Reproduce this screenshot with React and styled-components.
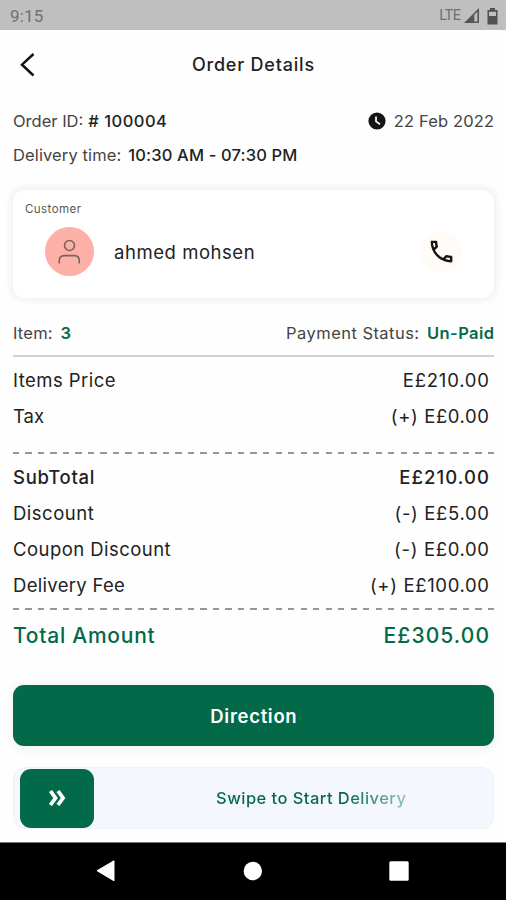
import React from "react";
import styled, { createGlobalStyle } from "styled-components";

const GREEN = "#026a49";

const GlobalStyle = createGlobalStyle`
  * {
    box-sizing: border-box;
  }
  body {
    margin: 0;
    background: #fefefe;
    font-family: Inter, Roboto, sans-serif;
  }
  button {
    font-family: inherit;
  }
`;

const Screen = styled.div`
  display: flex;
  flex-direction: column;
  height: 900px;
  overflow: hidden;
  color: #222;
`;

const StatusBar = styled.div`
  display: flex;
  align-items: center;
  flex: none;
  height: 30px;
  padding: 2px 8px 0 10px;
  background: #bfbfbf;
  font-family: Roboto, sans-serif;
`;

const StatusIcons = styled.div`
  display: flex;
  align-items: center;
  gap: 7px;
  margin-left: auto;
`;

const Header = styled.header`
  display: grid;
  grid-template-columns: 40px 1fr 40px;
  align-items: center;
  flex: none;
  height: 70px;
  padding: 0 13px;
  text-align: center;
`;

const BackButton = styled.button`
  display: flex;
  padding: 0 0 0 6px;
  border: none;
  background: none;
`;

const Content = styled.main`
  display: flex;
  flex-direction: column;
  flex: none;
  height: 742px;
  padding: 4px 12px 0 13px;
`;

const Text = styled.span`
  font-size: ${(props) => props.$size || 16.5}px;
  font-weight: ${(props) => props.$weight || 400};
  letter-spacing: ${(props) => props.$spacing || 0}px;
  margin-right: ${(props) => -(props.$spacing || 0)}px;
  color: ${(props) => props.$color || "#222"};
  line-height: 24px;
  white-space: pre;
`;

const Row = styled.div`
  display: flex;
  align-items: center;
  justify-content: space-between;
  flex: none;
  height: ${(props) => props.$height || 36}px;
  padding-right: ${(props) => props.$inset || 0}px;
`;

const Pair = styled.div`
  display: flex;
  align-items: center;
  gap: ${(props) => props.$gap || 7}px;
`;

const CustomerCard = styled.section`
  flex: none;
  height: 108px;
  margin: 19px 0 17px;
  padding: 7px 32px 0 12px;
  border-radius: 12px;
  background: #fff;
  box-shadow: 0 0 6px 3px #f1f1f1;
`;

const CardLabel = styled.div`
  display: flex;
  height: 25px;
`;

const CustomerRow = styled.div`
  display: flex;
  align-items: center;
  height: 59px;
  padding-left: 20px;
`;

const Avatar = styled.div`
  display: flex;
  align-items: center;
  justify-content: center;
  width: 49px;
  height: 49px;
  margin-right: 20px;
  border-radius: 50%;
  background: #fdb0a8;
`;

const CallButton = styled.button`
  display: flex;
  align-items: center;
  justify-content: center;
  width: 42px;
  height: 42px;
  margin-left: auto;
  padding: 0;
  border: none;
  border-radius: 50%;
  background: #fffcf8;
`;

const Divider = styled.div`
  flex: none;
  height: 2px;
  margin: 4px 0 5px;
  background: #d2d2d2;
`;

const DashedDivider = styled.div`
  flex: none;
  height: 2px;
  margin: ${(props) => props.$margin};
  background: repeating-linear-gradient(
    to right,
    #979797 0 6.3px,
    transparent 6.3px 12.5px
  );
`;

const DirectionButton = styled.button`
  flex: none;
  height: 61px;
  margin-top: 31px;
  padding: 0;
  border: none;
  border-radius: 11px;
  background: ${GREEN};
  box-shadow: 0 2px 9px 3px #f5f5f5;
`;

const SwipeTrack = styled.div`
  display: flex;
  align-items: center;
  flex: none;
  height: 62px;
  margin-top: 21px;
  padding: 0 6px;
  border: 1px solid #eff2f6;
  border-radius: 12px;
  background: #f4f7fe;
`;

const SwipeThumb = styled.div`
  display: flex;
  align-items: center;
  justify-content: center;
  width: 74px;
  height: 59px;
  border-radius: 11px;
  background: ${GREEN};
`;

const SwipeLabel = styled.div`
  flex: 1;
  padding-left: 41px;
  text-align: center;
`;

const ShimmerText = styled(Text)`
  color: transparent;
  background: linear-gradient(to right, ${GREEN} 68%, #8fc4b0 100%);
  background-clip: text;
`;

const NavBar = styled.nav`
  display: flex;
  align-items: center;
  justify-content: space-between;
  flex: 1;
  padding: 0 97px 2px 96px;
  border-top: 1px solid #777;
  background: #000;
`;

const BackIcon = () => (
  <svg width="16" height="26" viewBox="0 0 16 26" fill="none">
    <path d="M14.5 2L3 12.7L14.5 23.5" stroke="#111" strokeWidth="2.5" />
  </svg>
);

const SignalIcon = () => (
  <svg width="16" height="16" viewBox="0 0 16 16">
    <path d="M0 15L15 0V15Z" fill="#555" />
    <path d="M10.3 6.8L13.4 3.7V13.5H10.3Z" fill="#bfbfbf" />
  </svg>
);

const BatteryIcon = () => (
  <svg width="11" height="17" viewBox="0 0 11 17">
    <path d="M3 0H8V2H10.5V16.5H0.5V2H3Z" fill="#505050" />
    <path d="M2 3.8H9V8H2Z" fill="#bfbfbf" />
  </svg>
);

const ClockIcon = () => (
  <svg width="18" height="18" viewBox="0 0 18 18">
    <circle cx="9" cy="9" r="8.6" fill="#151515" />
    <path d="M8 4.5V9.4L12 12.3" fill="none" stroke="#fff" strokeWidth="1.7" />
  </svg>
);

const PersonIcon = () => (
  <svg width="24" height="26" viewBox="0 0 24 26" fill="none">
    <g stroke="#79635d" strokeWidth="1.6">
      <circle cx="11.5" cy="6.5" r="5" />
      <path d="M1.3 24.5V21.8C1.3 18.8 3.2 16.6 6.3 16.6H16.3C19.4 16.6 21.3 18.8 21.3 21.8V24.5" />
    </g>
  </svg>
);

const PhoneIcon = () => (
  <svg width="29" height="29" viewBox="0 0 24 24">
    <path
      fill="#151515"
      d="M6.54 5c.06.89.21 1.76.45 2.59l-1.2 1.2c-.41-1.2-.67-2.47-.76-3.79h1.51m9.86 12.02c.85.24 1.72.39 2.6.45v1.49c-1.32-.09-2.59-.35-3.8-.75l1.2-1.19M7.5 3H4c-.55 0-1 .45-1 1 0 9.39 7.61 17 17 17 .55 0 1-.45 1-1v-3.49c0-.55-.45-1-1-1-1.24 0-2.45-.2-3.57-.57-.1-.04-.21-.05-.31-.05-.26 0-.51.1-.71.29l-2.2 2.2c-2.83-1.45-5.15-3.76-6.59-6.59l2.2-2.2c.28-.28.36-.67.25-1.02C8.7 6.45 8.5 5.25 8.5 4c0-.55-.45-1-1-1z"
    />
  </svg>
);

const ChevronsIcon = () => (
  <svg width="18" height="18" viewBox="0 0 18 18" fill="none">
    <path
      d="M2.5 2L7.5 9L2.5 16M10 2L15 9L10 16"
      stroke="#fff"
      strokeWidth="3.8"
    />
  </svg>
);

const NavIcons = () => (
  <>
    <svg width="19" height="22" viewBox="0 0 19 22">
      <path d="M1 10.7L18 0.8V20.8Z" fill="#fff" stroke="#fff" />
    </svg>
    <svg width="20" height="20" viewBox="0 0 20 20">
      <circle cx="10.8" cy="10" r="9.2" fill="#fff" />
    </svg>
    <svg width="20" height="20" viewBox="0 0 20 20">
      <rect x="0.3" y="0.3" width="19.4" height="19.4" rx="1.5" fill="#fff" />
    </svg>
  </>
);

const PriceRow = ({ label, value, labelSpacing, valueSpacing, weight, size, color }) => (
  <Row $inset={5}>
    <Text $size={size || 18.5} $weight={weight} $color={color} $spacing={labelSpacing}>
      {label}
    </Text>
    <Text $size={size || 18.5} $weight={weight} $color={color} $spacing={valueSpacing}>
      {value}
    </Text>
  </Row>
);

const App = () => {
  return (
    <Screen>
      <GlobalStyle />
      <StatusBar>
        <Text $size={17} $color="#707070" $spacing={0.2}>
          9:15
        </Text>
        <StatusIcons>
          <Pair $gap={3}>
            <Text $size={14.5} $color="#707070" $spacing={-0.5}>
              LTE
            </Text>
            <SignalIcon />
          </Pair>
          <BatteryIcon />
        </StatusIcons>
      </StatusBar>
      <Header>
        <BackButton>
          <BackIcon />
        </BackButton>
        <Text $size={18} $weight={500} $spacing={0.8}>
          Order Details
        </Text>
      </Header>
      <Content>
        <Row $height={34}>
          <Pair $gap={5}>
            <Text $color="#444">Order ID:</Text>
            <Text $weight={500} $spacing={0.5}>
              # 100004
            </Text>
          </Pair>
          <Pair $gap={8}>
            <ClockIcon />
            <Text $color="#444" $spacing={0.15}>
              22 Feb 2022
            </Text>
          </Pair>
        </Row>
        <Row $height={33}>
          <Pair $gap={7}>
            <Text $color="#444" $spacing={0.12}>
              Delivery time:
            </Text>
            <Text $weight={500} $spacing={0.15}>
              10:30 AM - 07:30 PM
            </Text>
          </Pair>
        </Row>
        <CustomerCard>
          <CardLabel>
            <Text $size={11.5} $spacing={0.45} $color="#555">
              Customer
            </Text>
          </CardLabel>
          <CustomerRow>
            <Avatar>
              <PersonIcon />
            </Avatar>
            <Text $size={18.5} $spacing={0.55}>
              ahmed mohsen
            </Text>
            <CallButton>
              <PhoneIcon />
            </CallButton>
          </CustomerRow>
        </CustomerCard>
        <Row $height={36}>
          <Pair $gap={8}>
            <Text $color="#444" $spacing={0.2}>
              Item:
            </Text>
            <Text $weight={600} $color={GREEN}>
              3
            </Text>
          </Pair>
          <Pair $gap={8}>
            <Text $color="#444" $spacing={0.45}>
              Payment Status:
            </Text>
            <Text $weight={600} $color={GREEN} $spacing={0.4}>
              Un-Paid
            </Text>
          </Pair>
        </Row>
        <Divider />
        <PriceRow label="Items Price" value="E£210.00" labelSpacing={0.45} valueSpacing={0.8} />
        <PriceRow label="Tax" value="(+) E£0.00" valueSpacing={0.6} />
        <DashedDivider $margin="18px 0 5px" />
        <PriceRow
          label="SubTotal"
          value="E£210.00"
          weight={500}
          labelSpacing={0.7}
          valueSpacing={1.1}
        />
        <PriceRow label="Discount" value="(-) E£5.00" labelSpacing={0.5} valueSpacing={0.65} />
        <PriceRow label="Coupon Discount" value="(-) E£0.00" labelSpacing={0.45} valueSpacing={0.65} />
        <PriceRow label="Delivery Fee" value="(+) E£100.00" labelSpacing={0.3} valueSpacing={0.65} />
        <DashedDivider $margin="5px 0 8px" />
        <PriceRow
          label="Total Amount"
          value="E£305.00"
          weight={500}
          size={21}
          color={GREEN}
          labelSpacing={0.75}
          valueSpacing={1.1}
        />
        <DirectionButton>
          <Text $size={18.5} $weight={600} $color="#fff" $spacing={0.7}>
            Direction
          </Text>
        </DirectionButton>
        <SwipeTrack>
          <SwipeThumb>
            <ChevronsIcon />
          </SwipeThumb>
          <SwipeLabel>
            <ShimmerText $weight={500} $spacing={0.45}>
              Swipe to Start Delivery
            </ShimmerText>
          </SwipeLabel>
        </SwipeTrack>
      </Content>
      <NavBar>
        <NavIcons />
      </NavBar>
    </Screen>
  );
};

export default App;
